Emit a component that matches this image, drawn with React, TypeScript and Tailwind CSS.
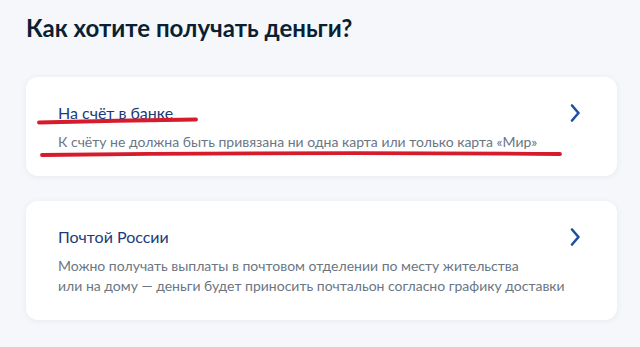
import React from 'react';

function Chevron() {
  return (
    <svg width="12" height="20" viewBox="0 0 12 20" className="shrink-0 mt-[2px]">
      <path d="M3 2.5 L9.5 10 L3 17.5" fill="none" stroke="#1f4fa3" strokeWidth="2.6" strokeLinecap="round" strokeLinejoin="round" />
    </svg>
  );
}

function Option({ title, children, marked }: { title: string; children: React.ReactNode; marked?: boolean }) {
  return (
    <div className="relative bg-white rounded-[12px] shadow-[0_1px_6px_rgba(40,60,100,0.07)] pl-[32px] pr-[36px] pt-[24px] pb-[24px] flex justify-between cursor-pointer">
      <div>
        <div className="text-[16px] leading-[24px] text-[#1c3b7a]">{title}</div>
        <div className="mt-[7px] text-[14px] leading-[20px] text-[#6b7683]">{children}</div>
      </div>
      <Chevron />
      {marked && (
        <svg className="absolute left-0 top-0 pointer-events-none" width="600" height="100">
          <path d="M13 45.5 Q90 43.5 170 42.5" stroke="#d51b2c" strokeWidth="3.8" fill="none" strokeLinecap="round" />
          <path d="M16 78 Q280 75 534 77" stroke="#d51b2c" strokeWidth="3.8" fill="none" strokeLinecap="round" />
        </svg>
      )}
    </div>
  );
}

export default function App() {
  return (
    <div className="w-[640px] h-[347px] bg-[#f5f7fb] px-[26px] pt-[13px] font-['Lato',sans-serif] overflow-hidden">
      <h1 className="text-[24px] leading-[30px] font-bold text-[#0b1f33]">Как хотите получать деньги?</h1>
      <div className="mt-[34px] w-[591px] flex flex-col gap-[25px]">
        <Option title="На счёт в банке" marked>
          К счёту не должна быть привязана ни одна карта или только карта «Мир»
        </Option>
        <Option title="Почтой России">
          Можно получать выплаты в почтовом отделении по месту жительства
          <br />
          или на дому — деньги будет приносить почтальон согласно графику доставки
        </Option>
      </div>
    </div>
  );
}
